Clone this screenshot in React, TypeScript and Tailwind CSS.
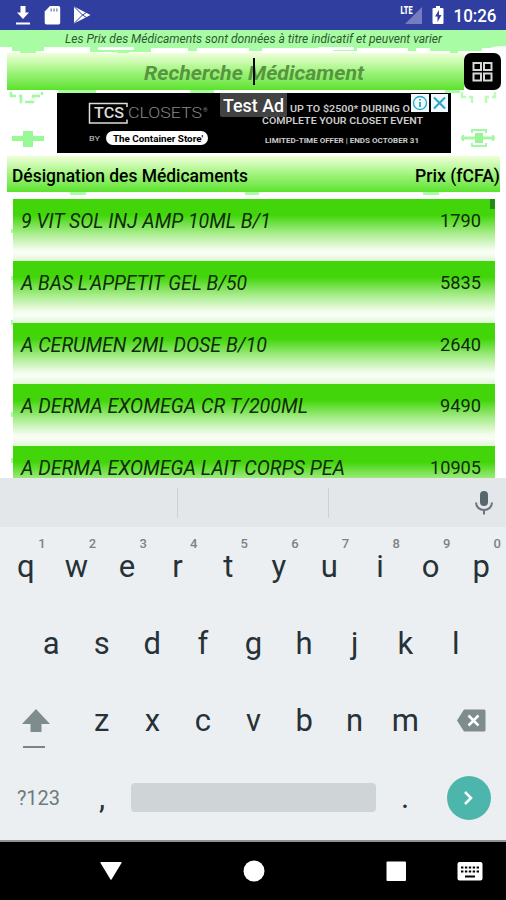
import type { ReactNode } from 'react'

const medicines = [
  { name: '9 VIT SOL INJ AMP 10ML B/1', price: 1790, width: 250 },
  { name: "A BAS L'APPETIT GEL B/50", price: 5835, width: 226 },
  { name: 'A CERUMEN 2ML DOSE B/10', price: 2640, width: 246 },
  { name: 'A DERMA EXOMEGA CR T/200ML', price: 9490, width: 287 },
  { name: 'A DERMA EXOMEGA LAIT CORPS PEA', price: 10905, width: 324 },
]

const topRow = ['q', 'w', 'e', 'r', 't', 'y', 'u', 'i', 'o', 'p']
const homeRow = ['a', 's', 'd', 'f', 'g', 'h', 'j', 'k', 'l']
const bottomRow = ['z', 'x', 'c', 'v', 'b', 'n', 'm']

// Single line of text stretched to a fixed width
function FitText({ width, height, size, baseline, className, children }: {
  width: number
  height: number
  size: number
  baseline: number
  className?: string
  children: string
}) {
  return (
    <svg width={width} height={height} className="block shrink-0 overflow-visible">
      <text x="0" y={baseline} fontSize={size} textLength={width} lengthAdjust="spacingAndGlyphs" className={className}>
        {children}
      </text>
    </svg>
  )
}

function StatusBar() {
  return (
    <div className="h-[30px] bg-[#303f9f] flex items-center text-white shrink-0">
      <svg width="100" height="30" fill="#fff">
        <path d="M20.500 6h5v6.500h3.500L23 19l-6-6.500h3.500zM16 22.500h14v2H16z" />
        <path d="M50 6h8.500q1.700 0 1.700 1.700v15.100q0 1.700-1.700 1.700H46.400q-1.700 0-1.700-1.700V11.500z" />
        <path d="M51.200 8.500v3M54 8.500v3M56.800 8.500v3" stroke="#8790c8" strokeWidth="1.500" />
        <path d="M74 6.500 90.500 15 74 23.500z" />
        <path d="M74 6.500 82.500 15 74 23.500M82.500 15l4-2.500M82.500 15l4 2.500" fill="none" stroke="#303f9f" strokeWidth="1" />
      </svg>
      <div className="flex-1" />
      <svg width="106" height="30">
        <text x="0.500" y="14" fontSize="10" textLength="12" lengthAdjust="spacingAndGlyphs" fontWeight="900" fill="#fff">LTE</text>
        <path d="M5 24 22 7v17z" fill="#737dc0" />
        <path fillRule="evenodd" d="M36 6h4v2h2.500q1 0 1 1v14q0 1-1 1h-9q-1 0-1-1V9q0-1 1-1H36zM39 10l-4 6.500h2.500V22l4-7H39z" fill="#fff" />
        <text x="53.500" y="21.500" fontSize="18" textLength="43" lengthAdjust="spacingAndGlyphs" fontWeight="500" fill="#fff">10:26</text>
      </svg>
    </div>
  )
}

// Pharmacy crosses behind the header and list
function Backdrop() {
  return (
    <svg className="absolute inset-0" width="506" height="448" fill="#a8fca4">
      <path d="M0 0h506v16q-12 0-16 2h-8v3h-24v3h-8v-3h-20v-3h-14v3h-24v-3h-35v3h-24v-3h-60v3h-24v-3h-52v3h-18v-3h-28v4h-22v3h-12v-3H90v-5H66l-22 0v4h-8v4H20v-4h-8v-4H0z" />
      <g fill="#fff">
        <rect x="52" y="18" width="30" height="4" rx="1" />
        <rect x="98" y="17" width="36" height="3" rx="1" />
        <rect x="158" y="18" width="30" height="4" rx="1" />
        <rect x="262" y="18" width="28" height="4" rx="1" />
        <rect x="318" y="17" width="36" height="3" rx="1" />
        <rect x="384" y="18" width="24" height="4" rx="1" />
      </g>
      <path fill="#99f997" d="M12 106h11v-5h10v5h11v5H33v6H23v-6H12z" />
      <g stroke="#a6f7a4" fill="none">
        <path d="M461 108h34" strokeWidth="3" />
        <path d="M472 103v-3h14v3M472 113v3h14v-3M463 105v6M493 105v6" strokeWidth="2" />
      </g>
      <path d="M475 103h8v10h-8z" fill="#98f496" />
      <g fill="none" stroke="#9ffa9d" strokeWidth="2.500" strokeDasharray="9 3">
        <path d="M11 62v4h10v6h12v-6h9v-4" />
        <path d="M462 62v5h10v6M486 73v-6h9v-5" strokeOpacity="0.700" />
      </g>
      <path d="M70 162h16v3H70zM245 162h14v3h-14zM423 162h16v3h-16zM58 60h38v3H58zM445 60h15v3h-15zM190 60h24v3h-24z" />
      <path d="M11 199h2v4h-2zM11 246h2v4h-2zM11 290h2v5h-2zM11 382h2v5h-2zM11 428h2v5h-2z" />
    </svg>
  )
}

function AdBanner() {
  return (
    <div className="ml-[57px] mt-[3px] w-[394px] h-[60px] bg-black">
      <svg width="394" height="60" fill="#fff">
        <path d="M70 14v-3.500H32.500v19.500H70v-3.500" fill="none" stroke="#ddd" strokeWidth="1.500" />
        <text x="37" y="25" fontSize="14.500" textLength="30" lengthAdjust="spacingAndGlyphs" fill="#ddd" fontWeight="500">TCS</text>
        <text x="71" y="25" fontSize="14.500" textLength="74" lengthAdjust="spacingAndGlyphs" fill="#868686" fontWeight="300">CLOSETS</text>
        <text x="146" y="19" fontSize="6" fill="#888">®</text>
        <text x="32" y="48" fontSize="7" textLength="11" lengthAdjust="spacingAndGlyphs" fontWeight="500" fill="#aaa">BY</text>
        <rect x="49" y="38" width="102" height="14" rx="7" />
        <text x="56" y="48.500" fontSize="9.500" textLength="90" lengthAdjust="spacingAndGlyphs" fontWeight="700" fill="#000">The Container Store'</text>
        <text x="233" y="18.500" fontSize="9" textLength="120" lengthAdjust="spacingAndGlyphs" fontWeight="600" fill="#ccc">UP TO $2500* DURING O</text>
        <text x="205" y="31" fontSize="9" textLength="161" lengthAdjust="spacingAndGlyphs" fontWeight="600" fill="#ccc">COMPLETE YOUR CLOSET EVENT</text>
        <text x="208" y="50" fontSize="6.500" textLength="154" lengthAdjust="spacingAndGlyphs" fontWeight="700" fill="#ccc">LIMITED-TIME OFFER | ENDS OCTOBER 31</text>
        <path d="M163 0h67v22q0 2-2 2h-63q-2 0-2-2z" fill="#424242" />
        <text x="166" y="19" fontSize="17.500" textLength="61" lengthAdjust="spacingAndGlyphs" fontWeight="500">Test Ad</text>
        <path d="M354 1h18v18h-18zM374 1h17v18h-17z" fill="#f1fbfd" />
        <g stroke="#27a7c4" fill="none" strokeWidth="1.300">
          <circle cx="363" cy="10" r="6.500" />
          <path d="M363 9v5M363 6v1.500" strokeWidth="1.800" />
          <path d="m377 4.500 11 11M388 4.500l-11 11" strokeWidth="2" />
        </g>
      </svg>
    </div>
  )
}

function Key({ label, hint }: { label: string; hint?: string }) {
  return (
    <div className="relative w-[50.6px] pl-px text-center text-[31px] leading-[40px] text-[#263238] font-normal">
      {label}
      {hint && <span className="absolute right-[5px] top-[-11px] text-[13px] leading-4 font-medium text-[#7b8386]">{hint}</span>}
    </div>
  )
}

function KeyRow({ children }: { children: ReactNode }) {
  return <div className="flex justify-center h-[77px] shrink-0">{children}</div>
}

function Keyboard() {
  return (
    <div className="h-[364px] bg-[#eceff1] border-b-2 border-[#909293] flex flex-col shrink-0">
      <div className="h-[49px] bg-[#e4e7e9] flex items-center shrink-0">
        <div className="w-[177px]" />
        <div className="w-[152px] h-[30px] border-x border-[#cdd1d3]" />
        <div className="flex-1" />
        <svg width="44" height="49" className="shrink-0">
          <rect x="18" y="13" width="8" height="15" rx="4" fill="#5a666d" />
          <path d="M14 24.500c0 10 16 10 16 0M22 32v4.500" fill="none" stroke="#68747a" strokeWidth="2" />
        </svg>
      </div>
      <div className="pt-[20px] flex flex-col">
        <KeyRow>
          {topRow.map((k, i) => <Key key={k} label={k} hint={String((i + 1) % 10)} />)}
        </KeyRow>
        <KeyRow>
          {homeRow.map((k) => <Key key={k} label={k} />)}
        </KeyRow>
        <KeyRow>
          <svg width="76" height="60" className="shrink-0">
            <path d="m36 8 14 15h-8.500v8h-11v-8H22z" fill="#7f8c8d" />
            <path d="M23 46h22" stroke="#7c8486" strokeWidth="2" />
          </svg>
          {bottomRow.map((k) => <Key key={k} label={k} />)}
          <svg width="76" height="60" className="shrink-0">
            <path d="M34 8.500h20q1.500 0 1.500 1.500v19q0 1.500-1.500 1.500H34l-7-11z" fill="#7f8c8d" />
            <path d="m38.500 14.500 10 10m0-10-10 10" stroke="#fff" strokeWidth="2.500" />
          </svg>
        </KeyRow>
        <div className="flex h-[60px]">
          <div className="w-[77px] text-center text-[20px] leading-[40px] text-[#6d7a80]">?123</div>
          <div className="w-[54px] pr-1 text-center text-[31px] leading-[40px] text-[#263238]">,</div>
          <div className="w-[245px] h-[29px] mt-[5px] rounded bg-[#cfd4d6]" />
          <div className="w-[58px] text-center text-[31px] leading-[40px] text-[#263238]">.</div>
          <svg width="72" height="44" className="-mt-[2px]">
            <circle cx="35" cy="22" r="22" fill="#4db6ac" />
            <path d="m31 16 6 6-6 6" fill="none" stroke="#fff" strokeWidth="2.500" />
          </svg>
        </div>
      </div>
    </div>
  )
}

function NavBar() {
  return (
    <svg width="506" height="58" className="block bg-black shrink-0" fill="#fff">
      <path d="M101 20h20q1 0 .5 1l-10 16.500q-.5.700-1 0L100.500 21q-.5-1 .5-1z" />
      <circle cx="254" cy="29" r="10.500" />
      <rect x="386.500" y="19.500" width="19.500" height="19.500" rx="1" />
      <rect x="457.500" y="20" width="25" height="18.500" rx="2" />
      <path d="M461 25.500h18M461 29.500h18" stroke="#000" strokeWidth="2" strokeDasharray="2.400 1.500" />
      <path d="M465 34.500h10" stroke="#000" strokeWidth="2" />
    </svg>
  )
}

export default function App() {
  return (
    <div className="w-[506px] h-[900px] overflow-hidden bg-white flex flex-col font-['Roboto',sans-serif]">
      <StatusBar />
      <div className="relative h-[448px] overflow-hidden shrink-0">
        <Backdrop />
        <div className="relative flex flex-col">
          <div className="pl-[65px] h-[23px]">
            <FitText width={377} height={17} size={12} baseline={13} className="italic fill-[#2c5a31]">
              Les Prix des Médicaments sont données à titre indicatif et peuvent varier
            </FitText>
          </div>

          <div className="flex pl-[7px] h-[37px]">
            <div className="w-[457px] pl-[137px] bg-linear-to-b from-[#efffd9] via-[#a0f47d] to-[#5be228] flex">
              <FitText width={220} height={37} size={20} baseline={26.5} className="italic font-bold fill-[#579541]">
                Recherche Médicament
              </FitText>
              <div className="w-[2px] h-[27px] mt-[5px] -ml-[111px] bg-black relative" />
            </div>
            <div className="w-[37px] h-[37px] rounded-[7px] bg-black">
              <svg width="37" height="37" fill="none" stroke="#d8d8d8" strokeWidth="2">
                <path d="M9.500 10h7.500v7H9.500zM20 10h7.500v7H20zM9.500 20.500h7.500v7H9.500zM20 20.500h7.500v7H20z" />
              </svg>
            </div>
          </div>

          <AdBanner />

          <div className="mx-[7px] w-[493px] mt-[3px] h-[36px] pl-[5px] bg-linear-to-b from-[#efffd9] via-[#a0f47d] to-[#5be228] flex justify-between">
            <FitText width={236} height={36} size={17.5} baseline={25.5} className="font-medium">Désignation des Médicaments</FitText>
            <FitText width={85} height={36} size={17.5} baseline={25.5} className="font-medium">Prix (fCFA)</FitText>
          </div>

          <div className="relative ml-[13px] mt-[7px] w-[482px]">
            {medicines.map((m) => (
              <div
                key={m.name}
                className="h-[61.8px] pl-2 pr-[14px] flex justify-between bg-[linear-gradient(to_bottom,#42d60a_0%,#42d60a_26%,#a6ec8a_55%,#f5fdef_82%,#f8fef5_88%,#dff6d5_100%)]"
              >
                <FitText width={m.width} height={30} size={19.5} baseline={28.5} className="italic fill-[#0f2c08]">{m.name}</FitText>
                <FitText width={m.price > 9999 ? 51 : 41} height={30} size={19} baseline={27.5} className="fill-[#0f2c08]">
                  {String(m.price)}
                </FitText>
              </div>
            ))}
            <div className="absolute right-0 top-0 w-[5px] h-[10px] bg-[#228b13]" />
          </div>
        </div>
      </div>
      <Keyboard />
      <NavBar />
    </div>
  )
}
